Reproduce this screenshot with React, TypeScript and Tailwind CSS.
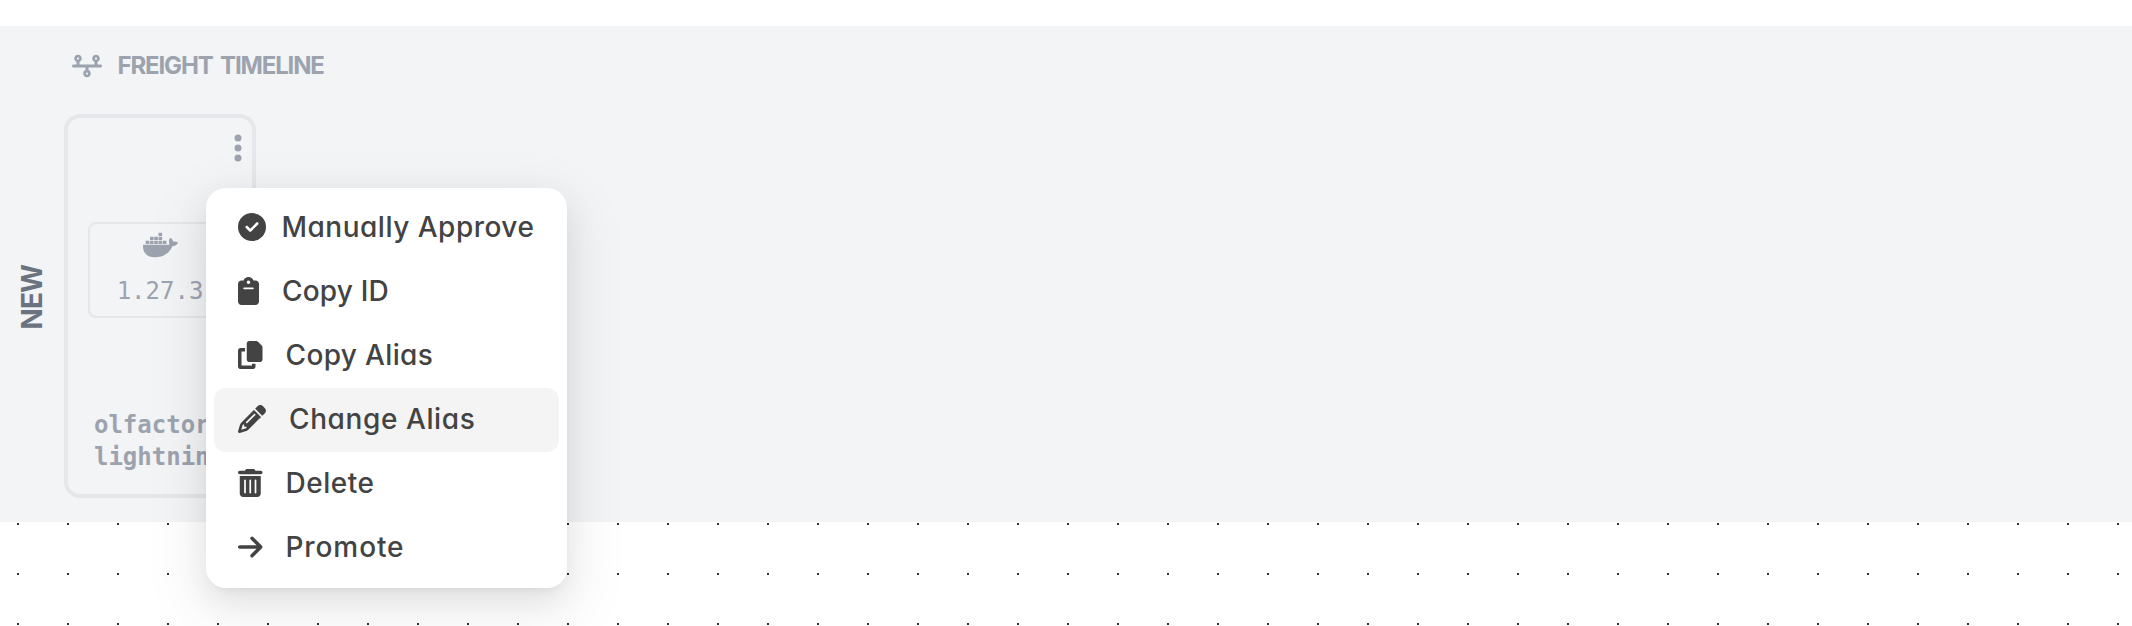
import React from 'react';
import {
  FaArrowRight,
  FaCircleCheck,
  FaClipboard,
  FaCopy,
  FaDocker,
  FaEllipsisVertical,
  FaPencil,
  FaTimeline,
  FaTrashCan,
} from 'react-icons/fa6';

const items = [
  { label: 'Manually Approve', Icon: FaCircleCheck, icon: 'w-7', text: 'ml-[15.5px] tracking-[0.5px]' },
  { label: 'Copy ID', Icon: FaClipboard, icon: 'w-[21px]', text: 'ml-[23px] tracking-[0.2px]' },
  { label: 'Copy Alias', Icon: FaCopy, icon: 'w-[24.5px]', text: 'ml-[23px] tracking-[0.35px]' },
  { label: 'Change Alias', Icon: FaPencil, icon: 'w-7', text: 'ml-[23px] tracking-[0.6px]', active: true },
  { label: 'Delete', Icon: FaTrashCan, icon: 'w-[24.5px]', text: 'ml-[23px] tracking-[0.5px]' },
  { label: 'Promote', Icon: FaArrowRight, icon: 'w-[24.5px]', text: 'ml-[23px] tracking-[0.9px]' },
];

function ContextMenu() {
  return (
    <ul className="absolute left-[206px] top-[188px] flex h-[400px] w-[361px] flex-col rounded-[20px] bg-white p-2 text-[28px] font-[450] text-[#434343] shadow-[0_12px_32px_0_rgba(0,0,0,0.08),0_6px_12px_-8px_rgba(0,0,0,0.12),0_18px_56px_16px_rgba(0,0,0,0.05)] [font-feature-settings:'cv11']">
      {items.map(({ label, Icon, icon, text, active }) => (
        <li
          key={label}
          className={`flex h-16 items-center rounded-xl pb-[2px] pl-6 ${active ? 'bg-[#f4f4f4]' : ''}`}
        >
          <Icon className={`h-7 shrink-0 ${icon}`} />
          <span className={`whitespace-nowrap ${text}`}>{label}</span>
        </li>
      ))}
    </ul>
  );
}

function FreightCard() {
  return (
    <div className="flex h-96 w-48 flex-col items-center rounded-2xl border-4 border-gray-200 text-[#9ca3af]">
      <div className="flex h-[104px] w-full justify-end pr-[10px] pt-[14px]">
        <FaEllipsisVertical className="h-8 w-2" />
      </div>
      <div className="flex h-24 w-36 flex-col items-center rounded-lg border-2 border-gray-200 pt-[7px]">
        <FaDocker className="h-7 w-[35px]" />
        <span className="mt-4 font-['DejaVu_Sans_Mono',monospace] text-2xl leading-8">1.27.3</span>
      </div>
      <div className="mt-[91px] pr-[2px] text-center font-['DejaVu_Sans_Mono',monospace] text-2xl font-bold leading-8">
        olfactory
        <br />
        lightning
      </div>
    </div>
  );
}

export default function App() {
  return (
    <div className="relative flex h-[626px] w-[2132px] flex-col overflow-hidden bg-white pt-[26px] font-['Inter',sans-serif]">
      <section className="flex h-[496px] bg-[#f3f4f6]">
        <div className="flex w-16 items-center justify-center pr-px pt-[46px]">
          <span className="rotate-180 text-[28px] font-bold leading-none tracking-[-1px] text-[#6b7280] [writing-mode:vertical-rl]">
            NEW
          </span>
        </div>
        <div className="flex flex-col">
          <header className="flex h-[88px] items-center pb-2 pl-2 text-[#9ca3af]">
            <FaTimeline className="h-6 w-[30px]" />
            <h2 className="ml-[15.5px] whitespace-nowrap text-2xl font-bold tracking-[-1.15px] [word-spacing:3px]">FREIGHT TIMELINE</h2>
          </header>
          <FreightCard />
        </div>
      </section>
      <div className="flex-1 [background-image:conic-gradient(from_90deg_at_48px_48px,#333_25%,transparent_0)] [background-position:-31px_-47px] [background-size:50px_50px]" />
      <ContextMenu />
    </div>
  );
}
